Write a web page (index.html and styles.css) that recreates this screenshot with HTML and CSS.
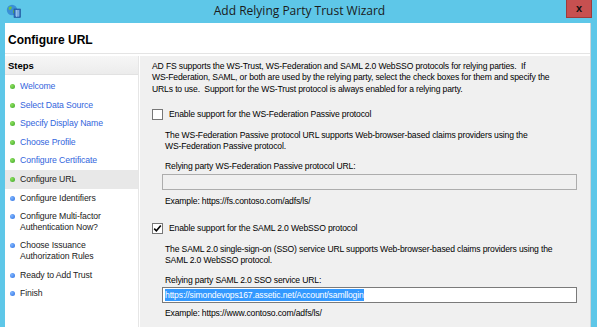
FILE: index.html
```html
<!DOCTYPE html>
<html>
<head>
<meta charset="utf-8">
<link rel="stylesheet" href="styles.css">
</head>
<body>
<div class="frame">
  <div class="titlebar">
    <svg class="appicon" width="15" height="14" viewBox="0 0 15 14">
      <circle cx="6" cy="6" r="5.2" fill="#3a8fd6"/>
      <path d="M2.5 3.5 Q4 2 6 3 L5 5.5 L3 6 Z" fill="#6cc04a"/>
      <path d="M7 6 L9.5 5.5 L9 8.5 L7 9.5 Z" fill="#6cc04a"/>
      <rect x="8" y="5" width="6.5" height="8.5" fill="#2f6fbe" stroke="#1c4f96" stroke-width="0.6"/>
      <path d="M9 7 H13.5 M9 9 H13.5 M9 11 H13.5 M10.5 6 V13 M12 6 V13" stroke="#bfe3ff" stroke-width="0.6"/>
    </svg>
    <div class="title">Add Relying Party Trust Wizard</div>
    <div class="close">x</div>
  </div>
  <div class="client">
    <div class="header">Configure URL</div>
    <div class="body">
      <div class="steps">
        <div class="steps-head">Steps</div>
        <ul class="step-list">
          <li class="step done"><span class="dot green"></span><span class="link">Welcome</span></li>
          <li class="step done"><span class="dot green"></span><span class="link">Select Data Source</span></li>
          <li class="step done"><span class="dot green"></span><span class="link">Specify Display Name</span></li>
          <li class="step done"><span class="dot green"></span><span class="link">Choose Profile</span></li>
          <li class="step done"><span class="dot green"></span><span class="link">Configure Certificate</span></li>
          <li class="step current"><span class="dot green"></span><span>Configure URL</span></li>
          <li class="step"><span class="dot blue"></span><span>Configure Identifiers</span></li>
          <li class="step"><span class="dot blue"></span><span>Configure Multi-factor<br>Authentication Now?</span></li>
          <li class="step"><span class="dot blue"></span><span>Choose Issuance<br>Authorization Rules</span></li>
          <li class="step"><span class="dot blue"></span><span>Ready to Add Trust</span></li>
          <li class="step"><span class="dot blue"></span><span>Finish</span></li>
        </ul>
      </div>
      <div class="main">
        <p class="intro">AD FS supports the WS-Trust, WS-Federation and SAML 2.0 WebSSO protocols for relying parties.&nbsp; If<br>WS-Federation, SAML, or both are used by the relying party, select the check boxes for them and specify the<br>URLs to use.&nbsp; Support for the WS-Trust protocol is always enabled for a relying party.</p>

        <div class="option">
          <span class="check"></span>
          <span>Enable support for the WS-Federation Passive protocol</span>
        </div>
        <div class="section">
          <p class="desc">The WS-Federation Passive protocol URL supports Web-browser-based claims providers using the<br>WS-Federation Passive protocol.</p>
          <p class="label">Relying party WS-Federation Passive protocol URL:</p>
          <div class="field disabled"></div>
          <p class="example">Example: https://fs.contoso.com/adfs/ls/</p>
        </div>

        <div class="option second">
          <span class="check checked">
            <svg width="9" height="9" viewBox="0 0 9 9"><path d="M1.2 4.6 L3.4 6.8 L7.8 1.6" fill="none" stroke="#000" stroke-width="1.6"/></svg>
          </span>
          <span>Enable support for the SAML 2.0 WebSSO protocol</span>
        </div>
        <div class="section tight">
          <p class="desc">The SAML 2.0 single-sign-on (SSO) service URL supports Web-browser-based claims providers using the<br>SAML 2.0 WebSSO protocol.</p>
          <p class="label">Relying party SAML 2.0 SSO service URL:</p>
          <div class="field active"><span class="selected">https://simondevops167.assetic.net/Account/samllogin</span></div>
          <p class="example">Example: https://www.contoso.com/adfs/ls/</p>
        </div>
      </div>
    </div>
  </div>
</div>
</body>
</html>
```

FILE: styles.css
```css
* { box-sizing: border-box; }
html, body { margin: 0; padding: 0; }
body {
  width: 597px;
  height: 327px;
  overflow: hidden;
  background: #5ec7e8;
  font-family: "Liberation Sans", Arial, sans-serif;
  color: #000;
}
.frame {
  padding: 0 6px 0 5px;
  height: 327px;
  display: flex;
  flex-direction: column;
}
.titlebar {
  height: 23px;
  position: relative;
  display: flex;
  align-items: center;
  justify-content: center;
}
.appicon {
  position: absolute;
  left: 1px;
  top: 4px;
}
.title {
  font-family: "Open Sans", "Noto Sans", sans-serif;
  font-size: 12px;
  color: #1a1a1a;
  margin-left: 3px;
  margin-top: -2px;
}
.close {
  position: absolute;
  right: -1px;
  top: 0;
  width: 26px;
  height: 18px;
  background: #c75050;
  border: 1px solid #9e3b3b;
  border-top: none;
  color: #111;
  font: bold 11px "Liberation Sans", Arial, sans-serif;
  display: flex;
  align-items: center;
  justify-content: center;
  padding-bottom: 2px;
}
.client {
  flex: 1;
  background: #fff;
  border-right: 1px solid #cfd6da;
  display: flex;
  flex-direction: column;
  min-height: 0;
}
.header {
  height: 31px;
  border-bottom: 1px solid #e4e4e4;
  padding: 4px 0 0 3px;
  display: flex;
  align-items: center;
  font-weight: bold;
  font-size: 12px;
}
.body {
  flex: 1;
  display: flex;
  padding-top: 2px;
  min-height: 0;
}
.steps {
  width: 134px;
  background: #fff;
  border-right: 1px solid #e6e6e6;
  flex: none;
}
.steps-head {
  height: 19px;
  background: linear-gradient(#f6f6f6, #ececec);
  border-bottom: 1px solid #e2e2e2;
  font-weight: bold;
  font-size: 9.5px;
  padding-left: 3px;
  display: flex;
  align-items: center;
}
.step-list {
  list-style: none;
  margin: 0;
  padding: 2px 0 0 0;
}
.step {
  display: flex;
  align-items: flex-start;
  padding: 4px 0 4px 4px;
  font-size: 8.7px;
  letter-spacing: -0.1px;
  line-height: 10.6px;
  color: #222;
}
.step.current { background: #e8e8e8; }
.link { color: #3366dd; }
.dot {
  width: 5px;
  height: 5px;
  border-radius: 50%;
  margin: 3px 5px 0 1px;
  flex: none;
}
.dot.green { background: radial-gradient(circle at 35% 35%, #8ee05c, #3aa528); }
.dot.blue { background: radial-gradient(circle at 35% 35%, #7fb5ff, #2a6ee0); }
.main {
  flex: 1;
  background: #f0f0f0;
  margin-left: 1px;
  padding: 5px 12px 0 12px;
  font-size: 8.6px;
  letter-spacing: -0.15px;
  line-height: 11.3px;
  white-space: nowrap;
}
p { margin: 0; }
.intro { margin-bottom: 13px; }
.option {
  display: flex;
  align-items: center;
  gap: 6px;
  height: 13px;
}
.option.second { margin-top: 15px; }
.check {
  width: 11px;
  height: 11px;
  background: #fff;
  border: 1px solid #777;
  display: flex;
  align-items: center;
  justify-content: center;
  flex: none;
}
.section {
  padding-left: 13px;
  padding-right: 1px;
}
.desc { margin-top: 9px; }
.label { margin-top: 9px; }
.tight .label { margin-top: 8px; }
.field {
  height: 16px;
  margin: 1px 0 0 -3px;
  border: 1px solid #adadad;
  display: flex;
  align-items: center;
  padding-left: 2px;
}
.field.disabled { background: #f0f0f0; }
.field.active { background: #fff; border-color: #7a7a7a; }
.selected {
  background: #3399ff;
  color: #fff;
  line-height: 12px;
}
.example { margin-top: 6px; }
.tight .example { margin-top: 5px; }
```
